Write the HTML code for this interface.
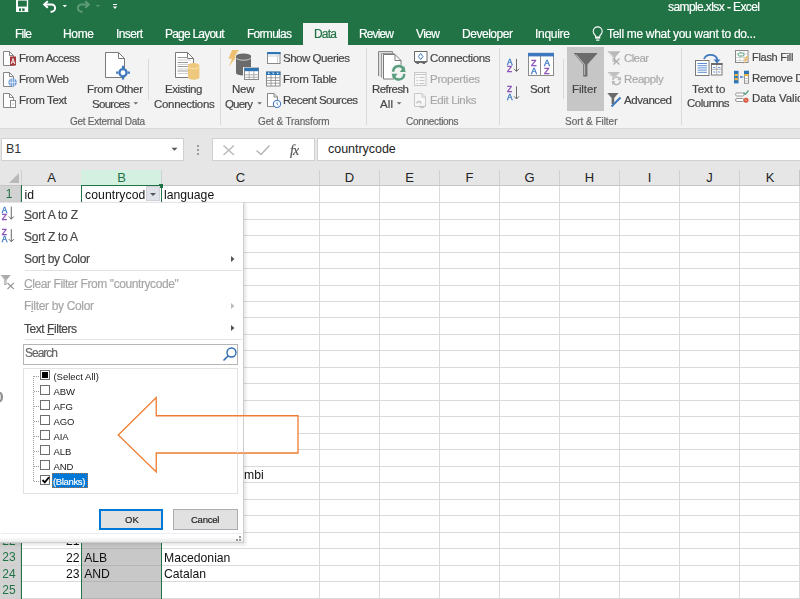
<!DOCTYPE html>
<html><head><meta charset="utf-8"><style>
html,body{margin:0;padding:0}
body{width:800px;height:599px;overflow:hidden;position:relative;background:#fff;font-family:"Liberation Sans",sans-serif}
div{position:absolute}
.t{white-space:nowrap}
u{text-decoration:underline;text-underline-offset:1px}
</style></head><body>
<div style="left:0px;top:0px;width:800px;height:45px;background:#217346"></div>
<svg style="position:absolute;left:16px;top:0px;" width="13" height="13" viewBox="0 0 13 13"><rect x="0" y="-1" width="12.2" height="13" fill="#fff"/><rect x="2" y="0.6" width="8.8" height="6" fill="#217346"/><rect x="3" y="8.4" width="5.6" height="2.7" fill="#217346"/><rect x="5" y="8.4" width="1.2" height="2.7" fill="#fff"/></svg>
<svg style="position:absolute;left:42px;top:0px;" width="16" height="14" viewBox="0 0 16 14"><path d="M2.5 4.5 H9.5 A3.6 3.6 0 0 1 9.5 11.7 H8.5" fill="none" stroke="#fff" stroke-width="2"/><path d="M5.8 1.2 L2.2 4.5 L5.8 7.8" fill="none" stroke="#fff" stroke-width="2"/></svg>
<svg style="position:absolute;left:62px;top:4px;" width="6" height="4" viewBox="0 0 6 4"><path d="M0.6 1 H5 L2.8 3.3 Z" fill="#fff"/></svg>
<svg style="position:absolute;left:75px;top:0px;" width="16" height="14" viewBox="0 0 16 14"><path d="M13.5 4.5 H6.5 A3.6 3.6 0 0 0 6.5 11.7 H7.5" fill="none" stroke="#5e9c78" stroke-width="2"/><path d="M10.2 1.2 L13.8 4.5 L10.2 7.8" fill="none" stroke="#5e9c78" stroke-width="2"/></svg>
<svg style="position:absolute;left:95px;top:4px;" width="6" height="4" viewBox="0 0 6 4"><path d="M0.8 1 H5 L2.9 3 Z" fill="#5e9c78"/></svg>
<svg style="position:absolute;left:112px;top:3px;" width="6" height="7" viewBox="0 0 6 7"><rect x="1" y="1" width="4" height="1" fill="#fff"/><path d="M0.8 3.5 H5.2 L3 6 Z" fill="#fff"/></svg>
<div class="t" style="left:668.00px;top:1px;font-size:12px;line-height:12px;color:#fff;letter-spacing:-0.594px;;will-change:transform;-webkit-text-stroke:0.18px #fff">sample.xlsx - Excel</div>
<div style="left:303px;top:23px;width:45px;height:22px;background:#f3f3f3"></div>
<div class="t" style="left:15.00px;top:28px;font-size:12px;line-height:12px;color:#fff;letter-spacing:-0.783px;;will-change:transform;-webkit-text-stroke:0.18px #fff">File</div>
<div class="t" style="left:63.00px;top:28px;font-size:12px;line-height:12px;color:#fff;letter-spacing:-0.333px;;will-change:transform;-webkit-text-stroke:0.18px #fff">Home</div>
<div class="t" style="left:116.00px;top:28px;font-size:12px;line-height:12px;color:#fff;letter-spacing:-0.600px;;will-change:transform;-webkit-text-stroke:0.18px #fff">Insert</div>
<div class="t" style="left:165.00px;top:28px;font-size:12px;line-height:12px;color:#fff;letter-spacing:-0.790px;;will-change:transform;-webkit-text-stroke:0.18px #fff">Page Layout</div>
<div class="t" style="left:247.00px;top:28px;font-size:12px;line-height:12px;color:#fff;letter-spacing:-0.714px;;will-change:transform;-webkit-text-stroke:0.18px #fff">Formulas</div>
<div class="t" style="left:314.00px;top:28px;font-size:12px;line-height:12px;color:#217346;letter-spacing:-0.800px;;will-change:transform;-webkit-text-stroke:0.18px #217346">Data</div>
<div class="t" style="left:359.00px;top:28px;font-size:12px;line-height:12px;color:#fff;letter-spacing:-0.880px;;will-change:transform;-webkit-text-stroke:0.18px #fff">Review</div>
<div class="t" style="left:416.00px;top:28px;font-size:12px;line-height:12px;color:#fff;letter-spacing:-0.617px;;will-change:transform;-webkit-text-stroke:0.18px #fff">View</div>
<div class="t" style="left:462.00px;top:28px;font-size:12px;line-height:12px;color:#fff;letter-spacing:-0.463px;;will-change:transform;-webkit-text-stroke:0.18px #fff">Developer</div>
<div class="t" style="left:535.00px;top:28px;font-size:12px;line-height:12px;color:#fff;letter-spacing:-0.283px;;will-change:transform;-webkit-text-stroke:0.18px #fff">Inquire</div>
<svg style="position:absolute;left:592px;top:26px;" width="12" height="16" viewBox="0 0 12 16"><path d="M3.6 9.8 Q1.2 7.2 1.2 5.4 A4.5 4.5 0 0 1 10.2 5.4 Q10.2 7.2 7.8 9.8 V11 H3.6 Z" fill="none" stroke="#fff" stroke-width="1.1"/><rect x="3.2" y="11" width="5" height="1.6" fill="#fff"/><rect x="4" y="13.5" width="3.4" height="1.2" fill="#fff"/></svg>
<div class="t" style="left:607.00px;top:28px;font-size:12px;line-height:12px;color:#fff;letter-spacing:-0.314px;;will-change:transform;-webkit-text-stroke:0.18px #fff">Tell me what you want to do...</div>
<div style="left:0px;top:45px;width:800px;height:83px;background:#f3f3f3"></div>
<div style="left:0px;top:128px;width:800px;height:1px;background:#d9d9d9"></div>
<div class="t" style="left:18.50px;top:53px;font-size:11.5px;line-height:11.5px;color:#444;letter-spacing:-0.545px;;will-change:transform;-webkit-text-stroke:0.18px #444">From Access</div>
<div class="t" style="left:18.50px;top:74px;font-size:11.5px;line-height:11.5px;color:#444;letter-spacing:-0.493px;;will-change:transform;-webkit-text-stroke:0.18px #444">From Web</div>
<div class="t" style="left:18.50px;top:95px;font-size:11.5px;line-height:11.5px;color:#444;letter-spacing:-0.362px;;will-change:transform;-webkit-text-stroke:0.18px #444">From Text</div>
<div class="t" style="left:87.00px;top:84px;font-size:11.5px;line-height:11.5px;color:#444;letter-spacing:-0.311px;;will-change:transform;-webkit-text-stroke:0.18px #444">From Other</div>
<div class="t" style="left:92.00px;top:99px;font-size:11.5px;line-height:11.5px;color:#444;letter-spacing:-0.700px;;will-change:transform;-webkit-text-stroke:0.18px #444">Sources</div>
<div class="t" style="left:70.00px;top:117px;font-size:10px;line-height:10px;color:#666;letter-spacing:-0.281px;;will-change:transform;-webkit-text-stroke:0.18px #666">Get External Data</div>
<div style="left:148px;top:59px;width:1px;height:41px;background:#dadada"></div>
<div class="t" style="left:165.00px;top:84px;font-size:11.5px;line-height:11.5px;color:#444;letter-spacing:-0.407px;;will-change:transform;-webkit-text-stroke:0.18px #444">Existing</div>
<div class="t" style="left:154.00px;top:99px;font-size:11.5px;line-height:11.5px;color:#444;letter-spacing:-0.315px;;will-change:transform;-webkit-text-stroke:0.18px #444">Connections</div>
<div style="left:220px;top:48px;width:1px;height:77px;background:#dadada"></div>
<div class="t" style="left:232.00px;top:84px;font-size:11.5px;line-height:11.5px;color:#444;letter-spacing:-0.225px;;will-change:transform;-webkit-text-stroke:0.18px #444">New</div>
<div class="t" style="left:225.00px;top:99px;font-size:11.5px;line-height:11.5px;color:#444;letter-spacing:-0.825px;;will-change:transform;-webkit-text-stroke:0.18px #444">Query</div>
<div class="t" style="left:283.00px;top:53px;font-size:11.5px;line-height:11.5px;color:#444;letter-spacing:-0.477px;;will-change:transform;-webkit-text-stroke:0.18px #444">Show Queries</div>
<div class="t" style="left:283.00px;top:74px;font-size:11.5px;line-height:11.5px;color:#444;letter-spacing:-0.367px;;will-change:transform;-webkit-text-stroke:0.18px #444">From Table</div>
<div class="t" style="left:283.00px;top:95px;font-size:11.5px;line-height:11.5px;color:#444;letter-spacing:-0.523px;;will-change:transform;-webkit-text-stroke:0.18px #444">Recent Sources</div>
<div class="t" style="left:258.00px;top:117px;font-size:10px;line-height:10px;color:#666;letter-spacing:-0.125px;;will-change:transform;-webkit-text-stroke:0.18px #666">Get &amp; Transform</div>
<div style="left:366px;top:48px;width:1px;height:77px;background:#dadada"></div>
<div class="t" style="left:372.00px;top:84px;font-size:11.5px;line-height:11.5px;color:#444;letter-spacing:-0.542px;;will-change:transform;-webkit-text-stroke:0.18px #444">Refresh</div>
<div class="t" style="left:380.00px;top:99px;font-size:11.5px;line-height:11.5px;color:#444;letter-spacing:0.100px;;will-change:transform;-webkit-text-stroke:0.18px #444">All</div>
<div class="t" style="left:430.00px;top:53px;font-size:11.5px;line-height:11.5px;color:#444;letter-spacing:-0.335px;;will-change:transform;-webkit-text-stroke:0.18px #444">Connections</div>
<div class="t" style="left:430.00px;top:74px;font-size:11.5px;line-height:11.5px;color:#a8a8a8;letter-spacing:-0.267px;;will-change:transform;-webkit-text-stroke:0.18px #a8a8a8">Properties</div>
<div class="t" style="left:430.00px;top:95px;font-size:11.5px;line-height:11.5px;color:#a8a8a8;letter-spacing:-0.372px;;will-change:transform;-webkit-text-stroke:0.18px #a8a8a8">Edit Links</div>
<div class="t" style="left:406.40px;top:117px;font-size:10px;line-height:10px;color:#666;letter-spacing:-0.300px;;will-change:transform;-webkit-text-stroke:0.18px #666">Connections</div>
<div style="left:499px;top:48px;width:1px;height:77px;background:#dadada"></div>
<div class="t" style="left:530.00px;top:84px;font-size:11.5px;line-height:11.5px;color:#444;letter-spacing:-0.367px;;will-change:transform;-webkit-text-stroke:0.18px #444">Sort</div>
<div style="left:563px;top:59px;width:1px;height:40px;background:#dadada"></div>
<div style="left:567px;top:47px;width:37px;height:64px;background:#c6c6c6"></div>
<div class="t" style="left:572.00px;top:84px;font-size:11.5px;line-height:11.5px;color:#444;letter-spacing:-0.110px;;will-change:transform;-webkit-text-stroke:0.18px #444">Filter</div>
<div class="t" style="left:624.00px;top:53px;font-size:11.5px;line-height:11.5px;color:#a8a8a8;letter-spacing:-0.625px;;will-change:transform;-webkit-text-stroke:0.18px #a8a8a8">Clear</div>
<div class="t" style="left:624.00px;top:74px;font-size:11.5px;line-height:11.5px;color:#a8a8a8;letter-spacing:-0.408px;;will-change:transform;-webkit-text-stroke:0.18px #a8a8a8">Reapply</div>
<div class="t" style="left:624.00px;top:95px;font-size:11.5px;line-height:11.5px;color:#444;letter-spacing:-0.450px;;will-change:transform;-webkit-text-stroke:0.18px #444">Advanced</div>
<div class="t" style="left:564.50px;top:117px;font-size:10px;line-height:10px;color:#666;letter-spacing:-0.025px;;will-change:transform;-webkit-text-stroke:0.18px #666">Sort &amp; Filter</div>
<div style="left:681px;top:48px;width:1px;height:77px;background:#dadada"></div>
<div class="t" style="left:692.00px;top:84px;font-size:11.5px;line-height:11.5px;color:#444;letter-spacing:-0.083px;;will-change:transform;-webkit-text-stroke:0.18px #444">Text to</div>
<div class="t" style="left:687.00px;top:98px;font-size:11.5px;line-height:11.5px;color:#444;letter-spacing:-0.467px;;will-change:transform;-webkit-text-stroke:0.18px #444">Columns</div>
<div class="t" style="left:752.00px;top:52px;font-size:11px;line-height:11px;color:#444;letter-spacing:-0.289px;;will-change:transform;-webkit-text-stroke:0.18px #444">Flash Fill</div>
<div class="t" style="left:752.00px;top:72.5px;font-size:11.5px;line-height:11.5px;color:#444;letter-spacing:-0.400px;;will-change:transform;-webkit-text-stroke:0.18px #444">Remove Duplicates</div>
<div class="t" style="left:752.00px;top:93px;font-size:11.5px;line-height:11.5px;color:#444;letter-spacing:-0.100px;;will-change:transform;-webkit-text-stroke:0.18px #444">Data Validation</div>
<svg style="position:absolute;left:0px;top:44px;" width="800" height="84" viewBox="0 0 800 84"><g transform="translate(0,-44)"><path d="M3.5 51.5 H9.5 L13.5 55.5 V65.5 H3.5 Z" fill="#fff" stroke="#858585" stroke-width="1"/><path d="M9.5 51.5 V55.5 H13.5" fill="none" stroke="#858585" stroke-width="1"/><rect x="10" y="56.5" width="6" height="9" fill="#a4373a"/><path d="M11.2 64 L13 58.5 L14.8 64 M11.8 62.2 H14.2" stroke="#fff" stroke-width="0.9" fill="none"/><path d="M3.5 72.5 H9.5 L13.5 76.5 V86.5 H3.5 Z" fill="#fff" stroke="#858585" stroke-width="1"/><path d="M9.5 72.5 V76.5 H13.5" fill="none" stroke="#858585" stroke-width="1"/><circle cx="12.6" cy="82.4" r="4.2" fill="#6a9ad6"/><path d="M8.6 82.4 H16.6 M12.6 78.2 V86.6 M10.8 79 V86 M14.4 79 V86" stroke="#fff" stroke-width="0.6"/><path d="M3.5 93.5 H9.5 L13.5 97.5 V107.5 H3.5 Z" fill="#fff" stroke="#858585" stroke-width="1"/><path d="M9.5 93.5 V97.5 H13.5" fill="none" stroke="#858585" stroke-width="1"/><rect x="10.5" y="100.5" width="5" height="7" fill="#fff" stroke="#8a8a8a" stroke-width="1"/><path d="M12 104 H14" stroke="#bbb"/><path d="M105.5 52.5 H118.5 L124.5 58.5 V77.5 H105.5 Z" fill="#fff" stroke="#7a7a7a" stroke-width="1"/><path d="M118.5 52.5 V58.5 H124.5" fill="none" stroke="#7a7a7a" stroke-width="1"/><circle cx="123" cy="72.7" r="3.6" fill="#fff" stroke="#3e78bf" stroke-width="2.3"/><path d="M123 65.8 V68 M123 77.4 V79.6 M116.1 72.7 H118.3 M127.7 72.7 H129.9" stroke="#3e78bf" stroke-width="2.2"/><path d="M175.5 52.5 H187.5 L193.5 58.5 V77.5 H175.5 Z" fill="#fff" stroke="#7a7a7a" stroke-width="1"/><path d="M187.5 52.5 V58.5 H193.5" fill="none" stroke="#7a7a7a" stroke-width="1"/><path d="M177.5 57.5 H188" stroke="#9a9a9a" stroke-width="1"/><path d="M177.5 60 H191" stroke="#cfcfcf" stroke-width="1"/><path d="M177.5 62.5 H188" stroke="#9a9a9a" stroke-width="1"/><path d="M177.5 64.5 H191" stroke="#cfcfcf" stroke-width="1"/><path d="M177.5 66.5 H188" stroke="#9a9a9a" stroke-width="1"/><path d="M177.5 69 H191" stroke="#cfcfcf" stroke-width="1"/><path d="M177.5 71 H188" stroke="#9a9a9a" stroke-width="1"/><path d="M177.5 73.5 H191" stroke="#cfcfcf" stroke-width="1"/><path d="M188 65.5 A5.7 2.5 0 0 1 199.4 65.5 V77.3 A5.7 2.5 0 0 1 188 77.3 Z" fill="#eec87c"/><path d="M188.5 66.5 A5.2 2 0 0 0 199 66.5" fill="none" stroke="#fbe9c4" stroke-width="0.8"/><path d="M232 50 H238.7 L235.2 55.6 H237.5 L228.7 66.7 L232 58.7 H228.5 Z" fill="#eec070"/><path d="M235.2 56 A8.3 3.2 0 0 1 251.8 56 V73 A8.3 3.2 0 0 1 235.2 73 Z" fill="#f3f3f3"/><path d="M236 56 A7.5 2.6 0 0 1 251 56 V73 A7.5 2.4 0 0 1 236 73 Z" fill="#6b6b6b"/><path d="M236.5 58 A7 2.2 0 0 0 250.5 58" fill="none" stroke="#d8d8d8" stroke-width="0.9"/><rect x="243.5" y="67.5" width="16" height="12.5" fill="#fff" stroke="#f3f3f3" stroke-width="1"/><rect x="244.5" y="68" width="14" height="11.5" fill="#fff" stroke="#8a8a8a" stroke-width="1"/><rect x="244.5" y="68" width="14" height="3.2" fill="#2e75b6"/><path d="M249.2 71 V79.5 M253.8 71 V79.5 M244.5 74.8 H258.5 M244.5 77.3 H258.5" stroke="#9a9a9a" stroke-width="0.8"/><rect x="267.5" y="52.5" width="12.5" height="11" fill="#fff" stroke="#8a8a8a"/><rect x="267" y="52" width="13.5" height="2.2" fill="#2e75b6"/><path d="M277.5 55 V63 M268 56 H280" stroke="#c8c8c8" stroke-width="0.8"/><rect x="266.5" y="72" width="13.5" height="14" fill="#fff" stroke="#8a8a8a"/><rect x="266" y="71.6" width="14.5" height="3.4" fill="#2e75b6"/><path d="M271 75 V86 M275.5 75 V86 M266.5 77.8 H280 M266.5 80.5 H280 M266.5 83.2 H280" stroke="#8a8a8a" stroke-width="0.8"/><path d="M267.5 72.8 H270 L268.75 74.3 Z M272 72.8 H274.5 L273.25 74.3 Z M276.5 72.8 H279 L277.75 74.3 Z" fill="#fff"/><path d="M267.5 93.5 H274.0 L277.5 97.0 V106.5 H267.5 Z" fill="#fff" stroke="#858585" stroke-width="1"/><path d="M274.0 93.5 V97.0 H277.5" fill="none" stroke="#858585" stroke-width="1"/><circle cx="277" cy="103.9" r="3.6" fill="#fff" stroke="#3e78bf" stroke-width="1.1"/><path d="M277 101.8 V104 L278.4 105.3" fill="none" stroke="#3e78bf" stroke-width="0.8"/><path d="M378.5 76 V51.5 H392.5 V54 H381.5 V77.5" fill="#dcdcdc" stroke="#8a8a8a" stroke-width="1"/><path d="M381.5 77.5 V53.5 H394 V54.5 H383.5 V78" fill="#e8e8e8" stroke="#9a9a9a" stroke-width="1"/><path d="M383.5 54.5 H395.0 L401.0 60.5 V79.0 H383.5 Z" fill="#fff" stroke="#7a7a7a" stroke-width="1"/><path d="M395.0 54.5 V60.5 H401.0" fill="none" stroke="#7a7a7a" stroke-width="1"/><circle cx="398.7" cy="72.8" r="8.3" fill="#f3f3f3"/><path d="M393.2 71.7 A5.4 5.4 0 0 1 403.6 69.5" fill="none" stroke="#5a9e80" stroke-width="2.4"/><path d="M404.2 73.9 A5.4 5.4 0 0 1 393.8 76.1" fill="none" stroke="#5a9e80" stroke-width="2.4"/><path d="M404.3 66 L405.6 71.9 L399.8 71.9 Z M393 79.6 L391.8 73.7 L397.6 73.7 Z" fill="#5a9e80"/><rect x="414.5" y="51.5" width="12.5" height="10" fill="#fff" stroke="#6b6b6b"/><path d="M415 62.5 H426.5 M416.5 63.5 H419 M422.5 63.5 H425" stroke="#6b6b6b" stroke-width="1"/><path d="M420.7 53.5 L423 56.5 L420.7 59.5 L418.4 56.5 Z" fill="none" stroke="#3e78bf" stroke-width="1"/><rect x="414.5" y="72.5" width="11.5" height="13" fill="#f7f7f7" stroke="#c8c8c8"/><path d="M414.5 74.5 H426 M416.5 77.5 H418 M419.5 77.5 H424.5 M416.5 80.5 H418 M419.5 80.5 H424.5 M416.5 83.5 H418 M419.5 83.5 H424.5" stroke="#c8c8c8" stroke-width="1"/><path d="M414.5 93.5 H422.0 L425.5 97.0 V106.5 H414.5 Z" fill="#f7f7f7" stroke="#c8c8c8" stroke-width="1"/><path d="M422.0 93.5 V97.0 H425.5" fill="none" stroke="#c8c8c8" stroke-width="1"/><path d="M417 103.5 A2 2 0 0 1 421 103.5 M420 105.5 A2 2 0 0 0 424 105.5" fill="none" stroke="#c0c0c0" stroke-width="1.3"/><text x="507" y="64.8" font-size="8.4" font-family="Liberation Sans" fill="#3a78c3" stroke="#3a78c3" stroke-width="0.35">A</text><text x="507" y="72.0" font-size="8.4" font-family="Liberation Sans" fill="#8a4fb8" stroke="#8a4fb8" stroke-width="0.35">Z</text><path d="M516.5 58.8 V71.5 M514 68.8 L516.5 71.5 L519 68.8" fill="none" stroke="#6b6b6b" stroke-width="1"/><text x="507" y="92.3" font-size="8.4" font-family="Liberation Sans" fill="#8a4fb8" stroke="#8a4fb8" stroke-width="0.35">Z</text><text x="507" y="99.5" font-size="8.4" font-family="Liberation Sans" fill="#3a78c3" stroke="#3a78c3" stroke-width="0.35">A</text><path d="M516.5 86.3 V99 M514 96.3 L516.5 99 L519 96.3" fill="none" stroke="#6b6b6b" stroke-width="1"/><rect x="528.5" y="54" width="25" height="21.5" fill="#fff" stroke="#8a8a8a"/><rect x="528" y="52.8" width="26" height="3.6" fill="#3e78bf"/><path d="M540.5 56 V75.5" stroke="#8a8a8a"/><g font-size="9" font-family="Liberation Sans" stroke-width="0.35"><text x="531" y="65.5" fill="#8a4fb8" stroke="#8a4fb8">Z</text><text x="531" y="73.8" fill="#3a78c3" stroke="#3a78c3">A</text><text x="544" y="65.5" fill="#3a78c3" stroke="#3a78c3">A</text><text x="544" y="73.8" fill="#8a4fb8" stroke="#8a4fb8">Z</text></g><path d="M573.6 53 H597.7 L587.4 64.5 V76.4 H583.2 V64.5 Z" fill="#6b6b6b"/><path d="M576 54.5 L584.7 64.8 V75" fill="none" stroke="#d8d8d8" stroke-width="0.8"/><path d="M607.3 51.3 H620.6 L615.3 57 V62 H612.6 V57 Z" fill="#b9b9b9"/><path d="M609 52.3 L613.4 57 V61" fill="none" stroke="#e6e6e6" stroke-width="0.7"/><path d="M613.5 58.5 L619.5 64.5 M619.5 58.5 L613.5 64.5" stroke="#a9a9a9" stroke-width="1.1"/><path d="M607.3 72 H620 L615 77.3 V80 H612.3 V77.3 Z" fill="#c0c0c0"/><path d="M609 73 L613 77.3 V79" fill="none" stroke="#e6e6e6" stroke-width="0.7"/><circle cx="616.5" cy="80.8" r="5" fill="#f3f3f3"/><path d="M612.8 80.3 A3.7 3.7 0 0 1 619.8 79" fill="none" stroke="#b8b8b8" stroke-width="1.5"/><path d="M620.2 81.3 A3.7 3.7 0 0 1 613.2 82.6" fill="none" stroke="#b8b8b8" stroke-width="1.5"/><path d="M620.8 76.5 L621.2 80.6 L617.4 80 Z M612.2 85.1 L611.8 81 L615.6 81.6 Z" fill="#b8b8b8"/><path d="M607.3 93 H618.5 L614.2 98 V104 H611.6 V98 Z" fill="#6b6b6b"/><path d="M611.5 106.5 L620.5 97.5" stroke="#3e78bf" stroke-width="2"/><rect x="695.5" y="60.5" width="13.5" height="15" fill="#fff" stroke="#7a7a7a"/><path d="M697.5 63.5 H707 M697.5 65.7 H707 M697.5 67.9 H707 M697.5 70.1 H707 M697.5 72.3 H707" stroke="#5b8fd0" stroke-width="1"/><rect x="711.5" y="63.5" width="10.5" height="11.5" fill="#fff" stroke="#7a7a7a"/><rect x="711" y="63" width="11.5" height="2" fill="#6b6b6b"/><path d="M716.75 65 V75 M711.5 69.3 H722" stroke="#9a9a9a" stroke-width="0.8"/><path d="M713 67.5 H715.5 M718 67.5 H720.5 M713 72 H715.5 M718 72 H720.5" stroke="#5b8fd0" stroke-width="0.9"/><path d="M704 59 A7 6 0 0 1 717 58.5 V60.5" fill="none" stroke="#3e78bf" stroke-width="1.8"/><path d="M713.5 59.5 L717 63.5 L720.5 59.5 Z" fill="#3e78bf"/><rect x="735.5" y="50.5" width="12.5" height="12" fill="#fff" stroke="#8a8a8a"/><path d="M736 54 H747.5 M736 57.5 H747.5 M736 60.5 H747.5 M740 51 V62 M744 51 V62" stroke="#c8c8c8" stroke-width="0.7"/><rect x="738" y="53" width="6" height="3" rx="1.5" fill="#fff" stroke="#4a9e7a" stroke-width="1"/><path d="M746.5 56 L743.5 60 H745.5 L743 64.5 L748.5 59 H746.5 L748.5 56 Z" fill="#eec070"/><rect x="734" y="70.8" width="4.5" height="12.6" fill="#2e75b6"/><rect x="734.6" y="74" width="3.3" height="2.2" fill="#f0b840"/><rect x="734.6" y="78" width="3.3" height="2.2" fill="#f0b840"/><rect x="744.5" y="71.3" width="4" height="12" fill="#fff" stroke="#8a8a8a" stroke-width="0.9"/><rect x="744" y="70.8" width="5" height="3.2" fill="#2e75b6"/><rect x="744.6" y="74" width="3.8" height="2.2" fill="#f0b840"/><path d="M744.5 78.5 H748.5 M744.5 81 H748.5" stroke="#aaa" stroke-width="0.7"/><path d="M740 77 H743.5" stroke="#3e78bf" stroke-width="1"/><path d="M739.8 77 L741.5 75.8 V78.2 Z" fill="#3e78bf"/><rect x="735.5" y="93" width="8.5" height="3" rx="1.5" fill="#fff" stroke="#8a8a8a" stroke-width="0.9"/><rect x="735.5" y="98.5" width="8.5" height="3" rx="1.5" fill="#fff" stroke="#8a8a8a" stroke-width="0.9"/><path d="M743.5 92.5 L745.3 94.3 L748.5 90.5" fill="none" stroke="#4a9e7a" stroke-width="1.2"/><circle cx="746" cy="100.2" r="2.5" fill="#d9533b"/><path d="M745 99.2 L747 101.2" stroke="#fff" stroke-width="0.7"/><path d="M133.5 102.3 H138.1 L135.8 104.6 Z" fill="#666"/><path d="M257.3 102.3 H261.90000000000003 L259.6 104.6 Z" fill="#666"/><path d="M396.8 102.3 H401.40000000000003 L399.1 104.6 Z" fill="#666"/></g></svg>
<div style="left:0px;top:129px;width:800px;height:41px;background:#e6e6e6"></div>
<div style="left:1px;top:138px;width:183px;height:23px;background:#fff;border:1px solid #d0d0d0;box-sizing:border-box"></div>
<div class="t" style="left:6.00px;top:143px;font-size:12.5px;line-height:12.5px;color:#333;letter-spacing:0.000px;">B1</div>
<svg style="position:absolute;left:171px;top:147px;" width="8" height="5" viewBox="0 0 8 5"><path d="M0.5 0.8 H6.5 L3.5 3.8 Z" fill="#555"/></svg>
<div style="left:197px;top:144.5px;width:2px;height:2px;background:#9a9a9a"></div>
<div style="left:197px;top:148.5px;width:2px;height:2px;background:#9a9a9a"></div>
<div style="left:197px;top:152.5px;width:2px;height:2px;background:#9a9a9a"></div>
<div style="left:212px;top:138px;width:103px;height:23px;background:#fff;border:1px solid #d0d0d0;box-sizing:border-box"></div>
<svg style="position:absolute;left:222px;top:144px;" width="14" height="12" viewBox="0 0 14 12"><path d="M1.5 1.5 L12 11 M12 1.5 L1.5 11" stroke="#b5b5b5" stroke-width="1.2"/></svg>
<svg style="position:absolute;left:255px;top:144px;" width="16" height="12" viewBox="0 0 16 12"><path d="M1.5 6.5 L6 10.5 L14.5 1.5" fill="none" stroke="#b5b5b5" stroke-width="1.5"/></svg>
<div class="t" style="left:290.00px;top:144px;font-size:14px;line-height:14px;color:#555;letter-spacing:0.000px;font-family:'Liberation Serif';font-style:italic;letter-spacing:-1px;will-change:transform;-webkit-text-stroke:0.18px #555">fx</div>
<div style="left:317px;top:138px;width:483px;height:23px;background:#fff;border:1px solid #d0d0d0;border-right:none;box-sizing:border-box"></div>
<div class="t" style="left:328.00px;top:143px;font-size:12.5px;line-height:12.5px;color:#222;letter-spacing:-0.030px;">countrycode</div>
<div style="left:0px;top:170px;width:800px;height:15px;background:#e6e6e6"></div>
<div style="left:81px;top:170px;width:81px;height:15px;background:#d3f0e0"></div>
<div style="left:0px;top:185px;width:800px;height:1px;background:#c6c6c6"></div>
<svg style="position:absolute;left:9px;top:173px;" width="10" height="10" viewBox="0 0 10 10"><path d="M10 0 V10 H0 Z" fill="#b9b9b9"/></svg>
<div class="t" style="left:21px;top:171px;width:61px;text-align:center;font-size:13px;line-height:13px;color:#222">A</div>
<div class="t" style="left:81px;top:171px;width:81px;text-align:center;font-size:13px;line-height:13px;color:#217346">B</div>
<div class="t" style="left:161px;top:171px;width:159px;text-align:center;font-size:13px;line-height:13px;color:#222">C</div>
<div style="left:319px;top:170px;width:1px;height:15px;background:#d0d0d0"></div>
<div class="t" style="left:319px;top:171px;width:61px;text-align:center;font-size:13px;line-height:13px;color:#222">D</div>
<div style="left:379px;top:170px;width:1px;height:15px;background:#d0d0d0"></div>
<div class="t" style="left:379px;top:171px;width:61px;text-align:center;font-size:13px;line-height:13px;color:#222">E</div>
<div style="left:439px;top:170px;width:1px;height:15px;background:#d0d0d0"></div>
<div class="t" style="left:439px;top:171px;width:61px;text-align:center;font-size:13px;line-height:13px;color:#222">F</div>
<div style="left:499px;top:170px;width:1px;height:15px;background:#d0d0d0"></div>
<div class="t" style="left:499px;top:171px;width:61px;text-align:center;font-size:13px;line-height:13px;color:#222">G</div>
<div style="left:559px;top:170px;width:1px;height:15px;background:#d0d0d0"></div>
<div class="t" style="left:559px;top:171px;width:61px;text-align:center;font-size:13px;line-height:13px;color:#222">H</div>
<div style="left:619px;top:170px;width:1px;height:15px;background:#d0d0d0"></div>
<div class="t" style="left:619px;top:171px;width:61px;text-align:center;font-size:13px;line-height:13px;color:#222">I</div>
<div style="left:679px;top:170px;width:1px;height:15px;background:#d0d0d0"></div>
<div class="t" style="left:679px;top:171px;width:61px;text-align:center;font-size:13px;line-height:13px;color:#222">J</div>
<div style="left:739px;top:170px;width:1px;height:15px;background:#d0d0d0"></div>
<div class="t" style="left:739px;top:171px;width:62px;text-align:center;font-size:13px;line-height:13px;color:#222">K</div>
<div style="left:21px;top:170px;width:1px;height:15px;background:#d0d0d0"></div>
<div style="left:161px;top:170px;width:1px;height:15px;background:#d0d0d0"></div>
<div style="left:799px;top:170px;width:1px;height:15px;background:#c6c6c6"></div>
<div style="left:0px;top:186px;width:21px;height:413px;background:#e6e6e6"></div>
<div style="left:21px;top:186px;width:779px;height:413px;background:#fff"></div>
<div style="left:21px;top:202px;width:779px;height:1px;background:#dadada"></div>
<div style="left:0px;top:202px;width:21px;height:1px;background:#cfcfcf"></div>
<div style="left:21px;top:219px;width:779px;height:1px;background:#dadada"></div>
<div style="left:0px;top:219px;width:21px;height:1px;background:#cfcfcf"></div>
<div style="left:21px;top:235px;width:779px;height:1px;background:#dadada"></div>
<div style="left:0px;top:235px;width:21px;height:1px;background:#cfcfcf"></div>
<div style="left:21px;top:252px;width:779px;height:1px;background:#dadada"></div>
<div style="left:0px;top:252px;width:21px;height:1px;background:#cfcfcf"></div>
<div style="left:21px;top:268px;width:779px;height:1px;background:#dadada"></div>
<div style="left:0px;top:268px;width:21px;height:1px;background:#cfcfcf"></div>
<div style="left:21px;top:285px;width:779px;height:1px;background:#dadada"></div>
<div style="left:0px;top:285px;width:21px;height:1px;background:#cfcfcf"></div>
<div style="left:21px;top:301px;width:779px;height:1px;background:#dadada"></div>
<div style="left:0px;top:301px;width:21px;height:1px;background:#cfcfcf"></div>
<div style="left:21px;top:317px;width:779px;height:1px;background:#dadada"></div>
<div style="left:0px;top:317px;width:21px;height:1px;background:#cfcfcf"></div>
<div style="left:21px;top:334px;width:779px;height:1px;background:#dadada"></div>
<div style="left:0px;top:334px;width:21px;height:1px;background:#cfcfcf"></div>
<div style="left:21px;top:350px;width:779px;height:1px;background:#dadada"></div>
<div style="left:0px;top:350px;width:21px;height:1px;background:#cfcfcf"></div>
<div style="left:21px;top:367px;width:779px;height:1px;background:#dadada"></div>
<div style="left:0px;top:367px;width:21px;height:1px;background:#cfcfcf"></div>
<div style="left:21px;top:383px;width:779px;height:1px;background:#dadada"></div>
<div style="left:0px;top:383px;width:21px;height:1px;background:#cfcfcf"></div>
<div style="left:21px;top:400px;width:779px;height:1px;background:#dadada"></div>
<div style="left:0px;top:400px;width:21px;height:1px;background:#cfcfcf"></div>
<div style="left:21px;top:416px;width:779px;height:1px;background:#dadada"></div>
<div style="left:0px;top:416px;width:21px;height:1px;background:#cfcfcf"></div>
<div style="left:21px;top:433px;width:779px;height:1px;background:#dadada"></div>
<div style="left:0px;top:433px;width:21px;height:1px;background:#cfcfcf"></div>
<div style="left:21px;top:449px;width:779px;height:1px;background:#dadada"></div>
<div style="left:0px;top:449px;width:21px;height:1px;background:#cfcfcf"></div>
<div style="left:21px;top:466px;width:779px;height:1px;background:#dadada"></div>
<div style="left:0px;top:466px;width:21px;height:1px;background:#cfcfcf"></div>
<div style="left:21px;top:482px;width:779px;height:1px;background:#dadada"></div>
<div style="left:0px;top:482px;width:21px;height:1px;background:#cfcfcf"></div>
<div style="left:21px;top:499px;width:779px;height:1px;background:#dadada"></div>
<div style="left:0px;top:499px;width:21px;height:1px;background:#cfcfcf"></div>
<div style="left:21px;top:515px;width:779px;height:1px;background:#dadada"></div>
<div style="left:0px;top:515px;width:21px;height:1px;background:#cfcfcf"></div>
<div style="left:21px;top:532px;width:779px;height:1px;background:#dadada"></div>
<div style="left:0px;top:532px;width:21px;height:1px;background:#cfcfcf"></div>
<div style="left:21px;top:548px;width:779px;height:1px;background:#dadada"></div>
<div style="left:0px;top:548px;width:21px;height:1px;background:#cfcfcf"></div>
<div style="left:21px;top:565px;width:779px;height:1px;background:#dadada"></div>
<div style="left:0px;top:565px;width:21px;height:1px;background:#cfcfcf"></div>
<div style="left:21px;top:581px;width:779px;height:1px;background:#dadada"></div>
<div style="left:0px;top:581px;width:21px;height:1px;background:#cfcfcf"></div>
<div style="left:21px;top:598px;width:779px;height:1px;background:#dadada"></div>
<div style="left:0px;top:598px;width:21px;height:1px;background:#cfcfcf"></div>
<div style="left:161px;top:186px;width:1px;height:413px;background:#dadada"></div>
<div style="left:319px;top:186px;width:1px;height:413px;background:#dadada"></div>
<div style="left:379px;top:186px;width:1px;height:413px;background:#dadada"></div>
<div style="left:439px;top:186px;width:1px;height:413px;background:#dadada"></div>
<div style="left:499px;top:186px;width:1px;height:413px;background:#dadada"></div>
<div style="left:559px;top:186px;width:1px;height:413px;background:#dadada"></div>
<div style="left:619px;top:186px;width:1px;height:413px;background:#dadada"></div>
<div style="left:679px;top:186px;width:1px;height:413px;background:#dadada"></div>
<div style="left:739px;top:186px;width:1px;height:413px;background:#dadada"></div>
<div style="left:799px;top:186px;width:1px;height:413px;background:#dadada"></div>
<div style="left:0px;top:186px;width:20px;height:16px;background:#d2d2d2"></div>
<div style="left:0px;top:533px;width:20px;height:15px;background:#d2d2d2"></div>
<div style="left:0px;top:549px;width:20px;height:16px;background:#d2d2d2"></div>
<div style="left:0px;top:566px;width:20px;height:15px;background:#d2d2d2"></div>
<div style="left:0px;top:582px;width:20px;height:16px;background:#d2d2d2"></div>
<div style="left:20px;top:186px;width:1px;height:413px;background:#c6c6c6"></div>
<div style="left:82px;top:533px;width:79px;height:66px;background:#c8c8c8"></div>
<div style="left:82px;top:548px;width:79px;height:1px;background:#b5b5b5"></div>
<div style="left:82px;top:565px;width:79px;height:1px;background:#b5b5b5"></div>
<div style="left:82px;top:581px;width:79px;height:1px;background:#b5b5b5"></div>
<div style="left:82px;top:598px;width:79px;height:1px;background:#b5b5b5"></div>
<div style="left:21px;top:185px;width:1px;height:414px;background:#217346"></div>
<div style="left:81px;top:185px;width:1px;height:414px;background:#217346"></div>
<div style="left:161px;top:185px;width:1px;height:414px;background:#217346"></div>
<div style="left:81px;top:185px;width:81px;height:1px;background:#217346"></div>
<div style="left:159px;top:184px;width:4px;height:4px;background:#217346"></div>
<div class="t" style="left:0px;top:188px;width:18px;text-align:center;font-size:12px;line-height:12px;color:#217346">1</div>
<div class="t" style="left:0px;top:535px;width:18px;text-align:center;font-size:12px;line-height:12px;color:#217346">22</div>
<div class="t" style="left:0px;top:551px;width:18px;text-align:center;font-size:12px;line-height:12px;color:#217346">23</div>
<div class="t" style="left:0px;top:568px;width:18px;text-align:center;font-size:12px;line-height:12px;color:#217346">24</div>
<div class="t" style="left:0px;top:584px;width:18px;text-align:center;font-size:12px;line-height:12px;color:#217346">25</div>
<div class="t" style="left:24.50px;top:189px;font-size:12.2px;line-height:12.2px;color:#111;letter-spacing:0.000px;">id</div>
<div class="t" style="left:85.00px;top:189px;font-size:12.2px;line-height:12.2px;color:#111;letter-spacing:0.078px;">countrycod</div>
<div style="left:146px;top:186px;width:14px;height:15px;background:#dfe2e8;border:1px solid #cfd2d8;box-sizing:border-box"></div>
<svg style="position:absolute;left:150px;top:193px;" width="6" height="3" viewBox="0 0 6 3"><path d="M0 0 H6 L3 3 Z" fill="#555"/></svg>
<div class="t" style="left:164.00px;top:189px;font-size:12.2px;line-height:12.2px;color:#111;letter-spacing:0.000px;">language</div>
<div class="t" style="left:21px;top:535px;width:58.5px;text-align:right;font-size:12.2px;line-height:12px;color:#111">21</div>
<div class="t" style="left:21px;top:552px;width:58.5px;text-align:right;font-size:12.2px;line-height:12px;color:#111">22</div>
<div class="t" style="left:84.20px;top:552px;font-size:12.2px;line-height:12.2px;color:#111;letter-spacing:0.000px;">ALB</div>
<div class="t" style="left:164.00px;top:552px;font-size:12.2px;line-height:12.2px;color:#111;letter-spacing:0.000px;">Macedonian</div>
<div class="t" style="left:21px;top:568px;width:58.5px;text-align:right;font-size:12.2px;line-height:12px;color:#111">23</div>
<div class="t" style="left:84.20px;top:568px;font-size:12.2px;line-height:12.2px;color:#111;letter-spacing:0.000px;">AND</div>
<div class="t" style="left:164.00px;top:568px;font-size:12.2px;line-height:12.2px;color:#111;letter-spacing:0.000px;">Catalan</div>
<div class="t" style="left:244.00px;top:469px;font-size:12.2px;line-height:12.2px;color:#111;letter-spacing:0.000px;">mbi</div>
<div style="left:-2px;top:203px;width:248px;height:342px;background:rgba(0,0,0,0.10);filter:blur(1.6px)"></div>
<div style="left:-1px;top:202px;width:245px;height:341px;background:#fff;border:1px solid #cdcdcd;border-top-color:#e4e4e4;box-sizing:border-box"></div>
<div style="left:0px;top:537px;width:243px;height:5px;background:linear-gradient(#fff,#e9e9e9)"></div>
<svg style="position:absolute;left:0px;top:202px;" width="30" height="100" viewBox="0 0 30 100"><g transform="translate(0,-202)"><text x="1.8" y="212.5" font-size="8.4" font-family="Liberation Sans" fill="#3a78c3" stroke="#3a78c3" stroke-width="0.35">A</text><text x="1.8" y="219.7" font-size="8.4" font-family="Liberation Sans" fill="#8a4fb8" stroke="#8a4fb8" stroke-width="0.35">Z</text><path d="M11.3 206.5 V219.2 M8.8 216.5 L11.3 219.2 L13.8 216.5" fill="none" stroke="#6b6b6b" stroke-width="1"/><text x="1.8" y="235.10000000000002" font-size="8.4" font-family="Liberation Sans" fill="#8a4fb8" stroke="#8a4fb8" stroke-width="0.35">Z</text><text x="1.8" y="242.3" font-size="8.4" font-family="Liberation Sans" fill="#3a78c3" stroke="#3a78c3" stroke-width="0.35">A</text><path d="M11.3 229.10000000000002 V241.8 M8.8 239.10000000000002 L11.3 241.8 L13.8 239.10000000000002" fill="none" stroke="#6b6b6b" stroke-width="1"/><path d="M0.6 275 H10.8 L6.6 280 V285 H4.2 V280 Z" fill="#ababab"/><path d="M1.8 276 L5.3 280.2 V284" fill="none" stroke="#e0e0e0" stroke-width="0.7"/><path d="M7.5 283 L13.8 289 M13.8 283 L7.5 289" stroke="#9a9a9a" stroke-width="1.2"/></g></svg>
<div class="t" style="left:24.00px;top:209px;font-size:12px;line-height:12px;color:#474747;letter-spacing:-0.205px;;will-change:transform;-webkit-text-stroke:0.18px #474747"><u>S</u>ort A to Z</div>
<div class="t" style="left:24.00px;top:231px;font-size:12px;line-height:12px;color:#474747;letter-spacing:-0.270px;;will-change:transform;-webkit-text-stroke:0.18px #474747">S<u>o</u>rt Z to A</div>
<div class="t" style="left:24.00px;top:253px;font-size:12px;line-height:12px;color:#474747;letter-spacing:-0.337px;;will-change:transform;-webkit-text-stroke:0.18px #474747">Sor<u>t</u> by Color</div>
<svg style="position:absolute;left:230.5px;top:256px;" width="4" height="6" viewBox="0 0 4 6"><path d="M0 0 L3.5 3 L0 6 Z" fill="#555"/></svg>
<div style="left:25px;top:270px;width:217px;height:1px;background:#e2e2e2"></div>
<div class="t" style="left:24.00px;top:278px;font-size:12px;line-height:12px;color:#a6a6a6;letter-spacing:-0.418px;;will-change:transform;-webkit-text-stroke:0.18px #a6a6a6"><u>C</u>lear Filter From "countrycode"</div>
<div class="t" style="left:24.00px;top:300px;font-size:12px;line-height:12px;color:#a6a6a6;letter-spacing:-0.336px;;will-change:transform;-webkit-text-stroke:0.18px #a6a6a6">F<u>i</u>lter by Color</div>
<svg style="position:absolute;left:230.5px;top:302.5px;" width="4" height="6" viewBox="0 0 4 6"><path d="M0 0 L3.5 3 L0 6 Z" fill="#bdbdbd"/></svg>
<div class="t" style="left:24.00px;top:323px;font-size:12px;line-height:12px;color:#474747;letter-spacing:-0.455px;;will-change:transform;-webkit-text-stroke:0.18px #474747">Text <u>F</u>ilters</div>
<svg style="position:absolute;left:230.5px;top:325px;" width="4" height="6" viewBox="0 0 4 6"><path d="M0 0 L3.5 3 L0 6 Z" fill="#555"/></svg>
<div style="left:25px;top:339px;width:217px;height:1px;background:#e2e2e2"></div>
<div style="left:23px;top:344px;width:215px;height:21px;background:#fff;border:1px solid #b5b5b5;box-sizing:border-box"></div>
<div class="t" style="left:25.00px;top:347px;font-size:12px;line-height:12px;color:#666;letter-spacing:-1.000px;;will-change:transform;-webkit-text-stroke:0.18px #666">Search</div>
<svg style="position:absolute;left:222px;top:346px;" width="16" height="16" viewBox="0 0 16 16"><circle cx="9.5" cy="6.5" r="4.5" fill="none" stroke="#2b6cb0" stroke-width="1.4"/><path d="M6.3 9.7 L1.5 14.5" stroke="#2b6cb0" stroke-width="1.6"/></svg>
<div style="left:23px;top:368px;width:215px;height:126px;background:#fff;border:1px solid #e2e2e6;box-sizing:border-box"></div>
<svg style="position:absolute;left:30px;top:370px" width="12" height="115"><path d="M3.5 6 V112" stroke="#9a9a9a" stroke-dasharray="1 1"/><path d="M4 6.5 H10" stroke="#9a9a9a" stroke-dasharray="1 1"/><path d="M4 21.5 H10" stroke="#9a9a9a" stroke-dasharray="1 1"/><path d="M4 36.5 H10" stroke="#9a9a9a" stroke-dasharray="1 1"/><path d="M4 51.5 H10" stroke="#9a9a9a" stroke-dasharray="1 1"/><path d="M4 66.5 H10" stroke="#9a9a9a" stroke-dasharray="1 1"/><path d="M4 81.5 H10" stroke="#9a9a9a" stroke-dasharray="1 1"/><path d="M4 96.5 H10" stroke="#9a9a9a" stroke-dasharray="1 1"/><path d="M4 111.5 H10" stroke="#9a9a9a" stroke-dasharray="1 1"/></svg>
<div style="left:40px;top:370px;width:10px;height:10px;background:#fff;border:1px solid #6e6e6e;box-sizing:border-box"></div>
<div style="left:42px;top:372px;width:6px;height:6px;background:#000"></div>
<div class="t" style="left:53.40px;top:372px;font-size:9.5px;line-height:9.5px;color:#1a1a1a;letter-spacing:0.000px;">(Select All)</div>
<div style="left:40px;top:385px;width:10px;height:10px;background:#fff;border:1px solid #6e6e6e;box-sizing:border-box"></div>
<div class="t" style="left:53.40px;top:387px;font-size:9.5px;line-height:9.5px;color:#1a1a1a;letter-spacing:0.000px;">ABW</div>
<div style="left:40px;top:400px;width:10px;height:10px;background:#fff;border:1px solid #6e6e6e;box-sizing:border-box"></div>
<div class="t" style="left:53.40px;top:402px;font-size:9.5px;line-height:9.5px;color:#1a1a1a;letter-spacing:0.000px;">AFG</div>
<div style="left:40px;top:415px;width:10px;height:10px;background:#fff;border:1px solid #6e6e6e;box-sizing:border-box"></div>
<div class="t" style="left:53.40px;top:417px;font-size:9.5px;line-height:9.5px;color:#1a1a1a;letter-spacing:0.000px;">AGO</div>
<div style="left:40px;top:430px;width:10px;height:10px;background:#fff;border:1px solid #6e6e6e;box-sizing:border-box"></div>
<div class="t" style="left:53.40px;top:432px;font-size:9.5px;line-height:9.5px;color:#1a1a1a;letter-spacing:0.000px;">AIA</div>
<div style="left:40px;top:445px;width:10px;height:10px;background:#fff;border:1px solid #6e6e6e;box-sizing:border-box"></div>
<div class="t" style="left:53.40px;top:447px;font-size:9.5px;line-height:9.5px;color:#1a1a1a;letter-spacing:0.000px;">ALB</div>
<div style="left:40px;top:460px;width:10px;height:10px;background:#fff;border:1px solid #6e6e6e;box-sizing:border-box"></div>
<div class="t" style="left:53.40px;top:462px;font-size:9.5px;line-height:9.5px;color:#1a1a1a;letter-spacing:0.000px;">AND</div>
<div style="left:40px;top:475px;width:10px;height:10px;background:#fff;border:1px solid #6e6e6e;box-sizing:border-box"></div>
<svg style="position:absolute;left:41px;top:476px;" width="9" height="8" viewBox="0 0 9 8"><path d="M1.5 4 L3.8 6.3 L8 1.2" fill="none" stroke="#000" stroke-width="1.8"/></svg>
<div style="left:52px;top:473px;width:36px;height:15px;background:#0078d7;outline:1px dotted #b07040;outline-offset:-1px"></div>
<div class="t" style="left:53.20px;top:477px;font-size:9.5px;line-height:9.5px;color:#fff;letter-spacing:-0.350px;;will-change:transform;-webkit-text-stroke:0.18px #fff">(Blanks)</div>
<div style="left:99px;top:509px;width:64px;height:21px;background:#e1e1e1;border:2px solid #0078d7;box-sizing:border-box"></div>
<div class="t" style="left:124.60px;top:515px;font-size:9.5px;line-height:9.5px;color:#222;letter-spacing:0.000px;;will-change:transform;-webkit-text-stroke:0.18px #222">OK</div>
<div style="left:173px;top:509px;width:65px;height:21px;background:#e1e1e1;border:1px solid #adadad;box-sizing:border-box"></div>
<div class="t" style="left:191.00px;top:515px;font-size:9.5px;line-height:9.5px;color:#222;letter-spacing:-0.250px;;will-change:transform;-webkit-text-stroke:0.18px #222">Cancel</div>
<div style="left:1px;top:533px;width:241px;height:1px;background:#e8eef4"></div>
<div style="left:239px;top:536px;width:2px;height:2px;background:#9a9a9a"></div>
<div style="left:236px;top:539px;width:2px;height:2px;background:#9a9a9a"></div>
<div style="left:239px;top:539px;width:2px;height:2px;background:#9a9a9a"></div>
<div style="left:-8.3px;top:391px;width:11.5px;height:11.5px;border-radius:50%;border:2px solid #8f8f8f;background:#dcdcdc;box-sizing:border-box;filter:blur(0.4px)"></div>
<svg style="position:absolute;left:110px;top:390px;" width="200" height="90" viewBox="0 0 200 90"><path d="M8.25 45 L46.25 7.5 V25.75 H188 V63 H46.25 V82 Z" fill="#fff" stroke="#ed7d31" stroke-width="1.3" stroke-linejoin="miter"/></svg>
<div style="left:243px;top:417px;width:1px;height:36px;background:#cdcdcd"></div>
<div style="left:237px;top:417px;width:1px;height:36px;background:#ececf0"></div>
</body></html>
